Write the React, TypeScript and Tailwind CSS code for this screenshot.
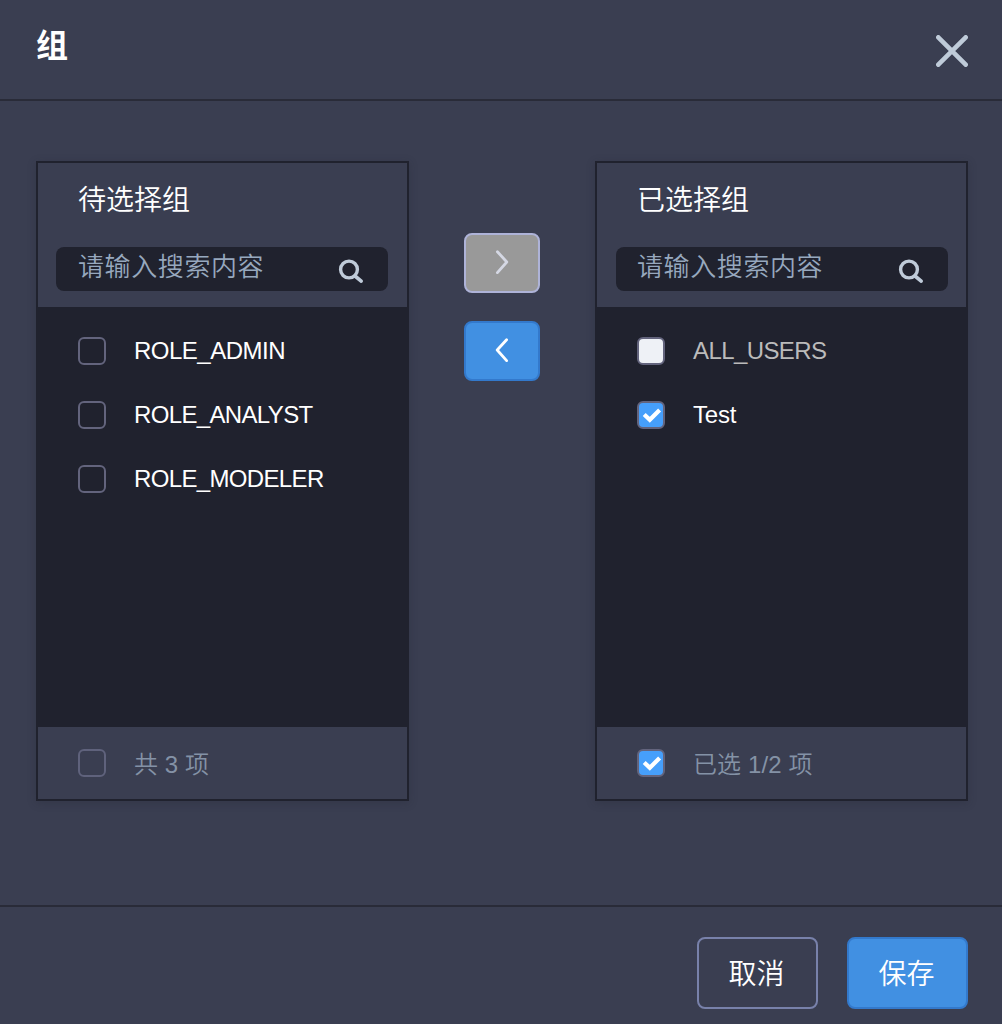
import React from "react";

type CheckState = "empty" | "disabled" | "checked";

function Checkbox({ state, muted = false }: { state: CheckState; muted?: boolean }) {
  const fill =
    state === "checked"
      ? "bg-[#469ffb] border-[#63647d]"
      : state === "disabled"
        ? "bg-[#eef1f6] border-[#63647d]"
        : muted
          ? "border-[#5f627c]"
          : "border-[#63647d]";
  return (
    <span
      role="checkbox"
      aria-checked={state === "checked"}
      className={`flex size-7 shrink-0 items-center justify-center rounded-[6px] border-2 ${fill}`}
    >
      {state === "checked" && (
        <svg width="24" height="24" viewBox="0 0 24 24" fill="none" stroke="#fff" strokeWidth="4.2">
          <path d="M5.2 11.4 L10.8 16.8 L20.6 7" />
        </svg>
      )}
    </span>
  );
}

function SearchBox({ offset }: { offset: string }) {
  return (
    <div className={`flex h-11 w-[332px] items-start justify-between rounded-lg bg-[#20222e] pr-6 ${offset}`}>
      <span className="whitespace-nowrap text-[26px] font-[350] leading-[35px] tracking-[0.6px] text-[#97a8be] font-['Noto_Sans_CJK_SC',sans-serif]">
        请输入搜索内容
      </span>
      <svg className="mt-3 shrink-0" width="26" height="26" viewBox="0 0 26 26" fill="none" stroke="#bfcbd9">
        <circle cx="11" cy="10.5" r="8.4" strokeWidth="3.4" />
        <path d="M17 17 L23.2 22.2" strokeWidth="3.6" strokeLinecap="round" />
      </svg>
    </div>
  );
}

interface Item {
  label: string;
  state: CheckState;
  tracking: string;
}

interface PanelProps {
  title: string;
  items: Item[];
  summary: string;
  footerState: CheckState;
  searchOffset: string;
}

function Panel({ title, items, summary, footerState, searchOffset }: PanelProps) {
  return (
    <section className="flex h-[640px] w-[373px] flex-col border-2 border-[#20222e] bg-[#3a3e51] shadow-[0_2px_8px_rgba(32,34,46,0.25)]">
      <header className="h-[144px]">
        <h2 className="h-[84px] pl-10 text-[28px] font-[350] leading-[70px] text-white font-['Noto_Sans_CJK_SC',sans-serif]">
          {title}
        </h2>
        <SearchBox offset={searchOffset} />
      </header>
      <ul className="h-[420px] bg-[#20222e] pl-10 pt-3">
        {items.map((item) => (
          <li key={item.label} className="flex h-16 items-center gap-7">
            <Checkbox state={item.state} />
            <span
              className={`whitespace-nowrap text-[24px] leading-8 font-['Liberation_Sans',sans-serif] ${item.tracking} ${
                item.state === "disabled" ? "text-[#bbbbbb]" : "text-white"
              }`}
            >
              {item.label}
            </span>
          </li>
        ))}
      </ul>
      <footer className="flex h-[72px] items-center gap-7 pl-10">
        <Checkbox state={footerState} muted />
        <span className="mt-[3px] whitespace-pre text-[24px] font-[350] leading-9 tracking-[0.1px] text-[#8492a6] font-['Liberation_Sans','Noto_Sans_CJK_SC',sans-serif]">
          {summary}
        </span>
      </footer>
    </section>
  );
}

export default function App() {
  return (
    <div className="flex h-[1024px] w-[1002px] flex-col overflow-hidden bg-[#3a3e51]">
      <header className="flex h-[101px] items-start justify-between border-b-2 border-[#292b38] pl-9 pr-[34px]">
        <h1 className="mt-[19px] text-[32px] font-bold leading-[48px] text-white font-['Noto_Sans_CJK_SC',sans-serif]">
          组
        </h1>
        <svg className="mt-[35px]" width="32" height="32" viewBox="0 0 32 32" stroke="#bfcbd9" strokeWidth="4.6" strokeLinecap="round">
          <path d="M2.3 2.3 L29.7 29.7 M29.7 2.3 L2.3 29.7" />
        </svg>
      </header>

      <main className="flex h-[804px] items-start justify-between pl-9 pr-[34px] pt-[60px]">
        <Panel
          title="待选择组"
          summary="共 3 项"
          footerState="empty"
          searchOffset="ml-[18px] pl-[22px]"
          items={[
            { label: "ROLE_ADMIN", state: "empty", tracking: "tracking-[-0.5px]" },
            { label: "ROLE_ANALYST", state: "empty", tracking: "tracking-[-0.65px]" },
            { label: "ROLE_MODELER", state: "empty", tracking: "tracking-[-0.65px]" },
          ]}
        />
        <div className="mt-[72px] flex flex-col gap-7">
          <button className="flex h-[60px] w-[76px] items-center justify-center rounded-lg border-2 border-[#aeb3d8] bg-[#999999]">
            <svg width="14" height="26" viewBox="0 0 14 26" fill="none" stroke="#d5d8e4" strokeWidth="2.8" strokeLinecap="round" strokeLinejoin="round">
              <path d="M2.4 1.7 L11.8 12 L2.4 22.6" />
            </svg>
          </button>
          <button className="flex h-[60px] w-[76px] items-center justify-center rounded-lg border-2 border-[#3379cc] bg-[#4190e2]">
            <svg width="14" height="26" viewBox="0 0 14 26" fill="none" stroke="#fff" strokeWidth="2.8" strokeLinecap="round" strokeLinejoin="round">
              <path d="M11.6 1.7 L2.2 12 L11.6 22.6" />
            </svg>
          </button>
        </div>
        <Panel
          title="已选择组"
          summary="已选 1/2 项"
          footerState="checked"
          searchOffset="ml-[19px] pl-[21px]"
          items={[
            { label: "ALL_USERS", state: "disabled", tracking: "tracking-[-0.6px]" },
            { label: "Test", state: "checked", tracking: "tracking-[-0.2px]" },
          ]}
        />
      </main>

      <footer className="flex h-[119px] items-start justify-end gap-[29px] border-t-2 border-[#292b38] pr-[34px] pt-[30px]">
        <button className="h-[72px] w-[121px] rounded-lg border-2 border-[#7881aa] pr-0.5 pb-0.5 text-[28px] font-[350] leading-[66px] text-white font-['Noto_Sans_CJK_SC',sans-serif]">
          取消
        </button>
        <button className="h-[72px] w-[121px] rounded-lg border-2 border-[#3379cc] bg-[#4190e2] pr-0.5 pb-0.5 text-[28px] font-[350] leading-[66px] text-white font-['Noto_Sans_CJK_SC',sans-serif]">
          保存
        </button>
      </footer>
    </div>
  );
}
